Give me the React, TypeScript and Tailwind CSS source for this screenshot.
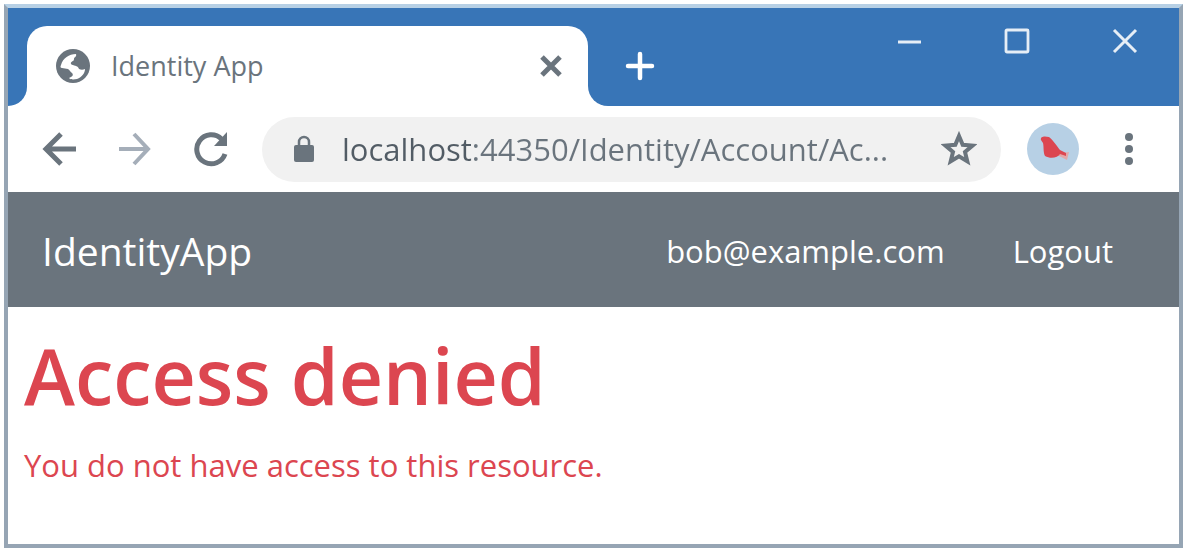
import type { ReactNode } from 'react';

function IconButton({ label, className, children }: { label: string; className: string; children: ReactNode }) {
  return (
    <button type="button" aria-label={label} className={`flex shrink-0 items-center justify-center ${className}`}>
      {children}
    </button>
  );
}

function TabStrip() {
  return (
    <div className="flex h-[98px]">
      <div className="w-[19px] shrink-0 rounded-br-[20px] bg-[#3875b7]" />
      <div className="w-[561px] shrink-0 bg-[#3875b7] pt-[18px]">
        <div className="flex h-20 items-center rounded-t-[20px] bg-white pl-7 pr-6">
          <svg viewBox="0 0 36 36" className="size-9 shrink-0" aria-hidden="true">
            <circle cx="18" cy="18" r="17" fill="#6a747d" />
            <path
              d="M21 6 C14 6 8 10 6 17 C5 19 5.500 20 7 20 L13 21 C15 22 15 24 17 25 C19 27 17 29 14 30 C16 32 19 31.500 22 31 C27 29 30 25 30 21 C28 22 26 22 24 21 C23 17 18 18 16 16 C15 13 19 14 19 11 C19 9 22 9 21 6 Z"
              fill="#fff"
            />
          </svg>
          <span className="ml-5 flex-1 truncate text-[27px]">Identity App</span>
          <IconButton label="Close tab" className="size-7">
            <svg viewBox="0 0 28 28" className="size-7" stroke="#6a747d" strokeWidth="5">
              <path d="M6 5 L24 23 M24 5 L6 23" />
            </svg>
          </IconButton>
        </div>
      </div>
      <div className="flex flex-1 justify-between rounded-bl-[20px] bg-[#3875b7] pl-9 pr-10">
        <IconButton label="New tab" className="mt-[42px] size-8">
          <svg viewBox="0 0 32 32" className="size-8" stroke="#fff" strokeWidth="4.500" strokeLinecap="round">
            <path d="M4 16 H28 M16 4 V28" />
          </svg>
        </IconButton>
        <div className="mt-5 flex gap-20">
          <IconButton label="Minimize" className="size-7">
            <svg viewBox="0 0 28 28" className="size-7" stroke="#e6eef6" strokeWidth="3">
              <path d="M3 14 H26" />
            </svg>
          </IconButton>
          <IconButton label="Maximize" className="size-7">
            <svg viewBox="0 0 28 28" className="size-7" stroke="#e6eef6" strokeWidth="2.8" fill="none">
              <rect x="3" y="2" width="22" height="22" rx="1" />
            </svg>
          </IconButton>
          <IconButton label="Close window" className="size-7">
            <svg viewBox="0 0 28 28" className="size-7" stroke="#e6eef6" strokeWidth="3">
              <path d="M3 2 L25 24 M25 2 L3 24" />
            </svg>
          </IconButton>
        </div>
      </div>
    </div>
  );
}

function Toolbar() {
  return (
    <div className="flex h-[86px] items-center px-[34px]">
      <IconButton label="Back" className="size-9">
        <svg viewBox="0 0 36 36" className="size-9" stroke="#6a747d" strokeWidth="5" fill="none">
          <path d="M34 18 H4 M19 3 L4 18 L19 33" />
        </svg>
      </IconButton>
      <IconButton label="Forward" className="ml-10 size-9">
        <svg viewBox="0 0 36 36" className="size-9" stroke="#a5aeb9" strokeWidth="4" fill="none">
          <path d="M1 18 H30 M16 3 L30 18 L16 33" />
        </svg>
      </IconButton>
      <IconButton label="Reload" className="ml-10 size-9">
        <svg viewBox="0 0 36 36" className="size-9" fill="none">
          <path d="M31 23 A14.500 14.500 0 1 1 27.500 8" stroke="#6a747d" strokeWidth="5" />
          <path d="M33 1 V15 H20 Z" fill="#6a747d" />
        </svg>
      </IconButton>
      <div className="ml-8 flex h-[65px] min-w-0 flex-1 items-center rounded-full bg-[#f1f1f1] pl-8 pr-6">
        <svg viewBox="0 0 20 28" className="h-7 w-5 shrink-0" aria-hidden="true">
          <path d="M5 12 V7 a5 5 0 0 1 10 0 V12" fill="none" stroke="#6a747d" strokeWidth="2.5" />
          <rect y="10" width="20" height="17" rx="2" fill="#6a747d" />
        </svg>
        <input
          type="text"
          aria-label="Address"
          defaultValue="localhost:44350/Identity/Account/Ac..."
          className="ml-7 min-w-0 flex-1 bg-transparent bg-[linear-gradient(to_right,#525c65_130px,#6a747d_130px)] bg-clip-text text-[31px] text-transparent outline-none"
        />
        <IconButton label="Bookmark this page" className="size-9">
          <svg viewBox="0 0 36 36" className="size-9" fill="none" stroke="#6a747d" strokeWidth="4">
            <path d="M18 5 L21.700 13.800 L31.500 14.600 L24 20.900 L26.300 30.300 L18 25.300 L9.700 30.300 L12 20.900 L4.500 14.600 L14.300 13.800 Z" />
          </svg>
        </IconButton>
      </div>
      <IconButton label="Profile" className="ml-[26px] size-[52px]">
        <svg viewBox="0 0 52 52" className="size-[52px]">
          <circle cx="26" cy="26" r="26" fill="#b7d0e5" />
          <path d="M28 29 L36 30 L42 29 L41 33 L40 37 L36 35 L30 32 Z" fill="#e3a7a8" />
          <path d="M14 17 C13 13 18 13 22 14 C26 17 30 23 33 27 L39 30 L39 33 L33 31 C31 35 23 36 18 33 C16 29 17 24 16 20 Z" fill="#dc4650" />
        </svg>
      </IconButton>
      <IconButton label="Menu" className="ml-[34px] size-8">
        <svg viewBox="0 0 32 32" className="size-8" fill="#6a747d">
          <circle cx="16" cy="4" r="4" />
          <circle cx="16" cy="16" r="4" />
          <circle cx="16" cy="28" r="4" />
        </svg>
      </IconButton>
    </div>
  );
}

export default function App() {
  return (
    <div className="bg-white px-1 py-1 font-['Open_Sans','Noto_Sans',sans-serif] text-[#6a747d]">
      <div className="border-x-4 border-b-4 border-t-4 border-[#96a5b4] border-t-[#b7d0e5]">
        <TabStrip />
        <Toolbar />
        <nav className="flex h-[115px] items-center bg-[#6a747d] pl-[34px] pr-[66px] pt-1 text-white">
          <a href="#" className="text-[39px]">IdentityApp</a>
          <div className="ml-auto flex gap-[68px] text-[31px] font-medium">
            <a href="#">bob@example.com</a>
            <a href="#">Logout</a>
          </div>
        </nav>
        <main className="h-[237px] px-4 pt-5 text-[#dc4650]">
          <h1 className="text-[77px] font-semibold leading-[98px]">Access denied</h1>
          <p className="mt-4 text-[31px] leading-[48px]">You do not have access to this resource.</p>
        </main>
      </div>
    </div>
  );
}
